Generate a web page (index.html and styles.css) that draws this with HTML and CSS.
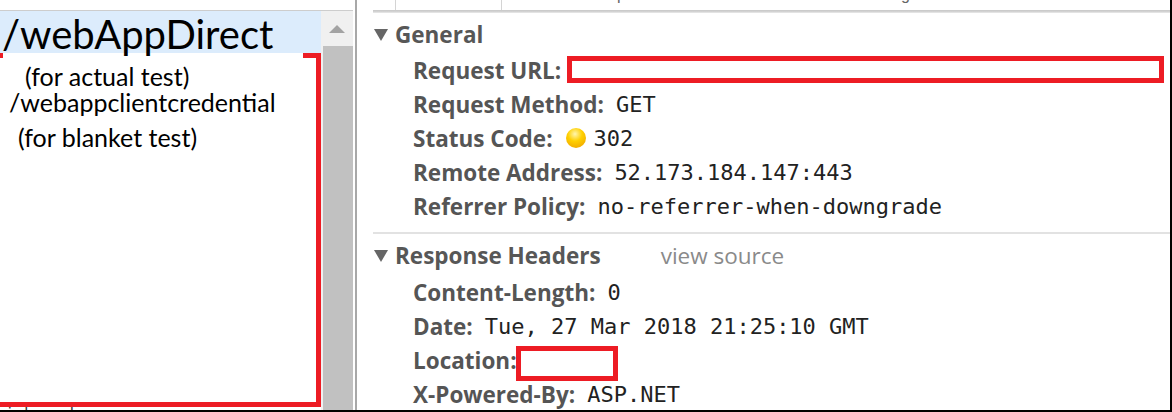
FILE: index.html
```html
<!DOCTYPE html>
<html>
<head>
<meta charset="utf-8">
<link rel="stylesheet" href="styles.css">
</head>
<body>
<div class="screen">
  <div class="left">
    <div class="top-strip"></div>
    <div class="left-body">
      <div class="list">
        <div class="row selected"></div>
        <div class="rest"></div>
        <div class="peek">ial. eaders</div>
      </div>
      <div class="scrollbar">
        <div class="arrow-cell"><span class="arrow"></span></div>
        <div class="thumb"></div>
      </div>
    </div>
    <div class="red-frame"></div>
    <div class="note-box">
      <div class="note-a">(for actual test)</div>
      <div class="note-b">/webappclientcredential</div>
      <div class="note-c">(for blanket test)</div>
    </div>
    <div class="note-title">/webAppDirect</div>
  </div>
  <div class="divider"><span class="gap"></span><span class="line"></span></div>
  <div class="right">
    <div class="cols">
      <span class="col c1"></span>
      <span class="col c2"><span class="desc d1">p</span></span>
      <span class="col c3"><span class="desc d2">g</span></span>
    </div>
    <div class="rule"></div>
    <div class="content">
      <div class="section-head"><span class="tri"></span>General</div>
      <div class="kv"><span class="k">Request URL:</span><span class="redact url"></span></div>
      <div class="kv"><span class="k">Request Method:</span><span class="v">GET</span></div>
      <div class="kv"><span class="k">Status Code:</span><span class="dot"></span><span class="v">302</span></div>
      <div class="kv"><span class="k">Remote Address:</span><span class="v">52.173.184.147:443</span></div>
      <div class="kv"><span class="k">Referrer Policy:</span><span class="v">no-referrer-when-downgrade</span></div>
      <div class="sep"></div>
      <div class="section-head second"><span class="tri"></span>Response Headers<span class="viewsrc">view source</span></div>
      <div class="kv"><span class="k">Content-Length:</span><span class="v">0</span></div>
      <div class="kv"><span class="k">Date:</span><span class="v">Tue, 27 Mar 2018 21:25:10 GMT</span></div>
      <div class="kv"><span class="k loc">Location:</span><span class="redact locbox"></span></div>
      <div class="kv"><span class="k">X-Powered-By:</span><span class="v">ASP.NET</span></div>
    </div>
  </div>
</div>
</body>
</html>
```
FILE: styles.css
```css
html, body {
  margin: 0;
  padding: 0;
  background: #fff;
  overflow: hidden;
}
.screen {
  width: 1172px;
  height: 410px;
  border-bottom: 2px solid #000;
  display: flex;
  overflow: hidden;
}
.left {
  position: relative;
  width: 353px;
  flex: none;
  display: flex;
  flex-direction: column;
  overflow: hidden;
}
.top-strip {
  height: 10px;
  border-bottom: 1px solid #cdcdcd;
  flex: none;
}
.left-body {
  flex: 1;
  display: flex;
  min-height: 0;
}
.list {
  width: 321px;
  flex: none;
  display: flex;
  flex-direction: column;
  overflow: hidden;
}
.row.selected {
  height: 42px;
  background: #dcecfc;
  flex: none;
}
.rest {
  flex: 1;
}
.peek {
  height: 4px;
  overflow: hidden;
  font-family: "Liberation Sans", sans-serif;
  font-size: 16px;
  line-height: 16px;
  color: #333;
  padding-left: 8px;
  letter-spacing: 2px;
  white-space: nowrap;
}
.scrollbar {
  width: 32px;
  flex: none;
  display: flex;
  flex-direction: column;
  background: #f0f0f0;
}
.arrow-cell {
  height: 35px;
  flex: none;
  display: flex;
  align-items: center;
  justify-content: center;
}
.arrow {
  width: 0;
  height: 0;
  border-left: 8px solid transparent;
  border-right: 8px solid transparent;
  border-bottom: 8px solid #a3a3a3;
}
.thumb {
  flex: 1;
  margin-left: 2px;
  background: #c1c1c1;
}
.divider {
  width: 4px;
  flex: none;
  display: flex;
}
.divider .gap {
  width: 2px;
  background: #fff;
}
.divider .line {
  width: 2px;
  background: #a8a8a8;
}
.right {
  flex: 1;
  border-right: 2px solid #000;
  display: flex;
  flex-direction: column;
  min-width: 0;
}
.cols {
  height: 10px;
  flex: none;
  display: flex;
  overflow: hidden;
}
.col {
  position: relative;
  height: 10px;
  border-right: 1px solid #d4d4d4;
  flex: none;
}
.c1 { width: 38px; }
.c2 { width: 105px; }
.c3 { flex: 1; border-right: none; }
.desc {
  position: absolute;
  top: -14px;
  font-family: "Liberation Sans", sans-serif;
  font-size: 16px;
  color: #666;
}
.d1 { left: 221px; }
.d2 { left: 399px; }
.rule {
  height: 3px;
  margin-left: 16px;
  background: linear-gradient(#cbcbcb, #cbcbcb 1px, #dadada 2px, #ececec);
  flex: none;
}
.content {
  padding-left: 17px;
  padding-top: 4px;
  font-family: "Open Sans", "Noto Sans", sans-serif;
  color: #555;
}
.section-head {
  height: 34px;
  display: flex;
  align-items: center;
  font-weight: bold;
  font-size: 22.5px;
  color: #575757;
  margin-bottom: 2px;
}
.section-head.second {
  margin-bottom: 3px;
}
.tri {
  width: 0;
  height: 0;
  border-left: 7px solid transparent;
  border-right: 7px solid transparent;
  border-top: 12px solid #666;
  margin-right: 7px;
  margin-top: 2px;
}
.viewsrc {
  font-weight: normal;
  color: #8a8a8a;
  margin-left: 60px;
}
.kv {
  height: 34px;
  display: flex;
  align-items: center;
  padding-left: 39px;
}
.k {
  font-weight: bold;
  font-size: 22.5px;
  color: #555;
  margin-right: 12px;
}
.k.loc {
  margin-right: -1px;
}
.v {
  font-family: "DejaVu Sans Mono", "Liberation Mono", monospace;
  font-size: 22px;
  color: #222;
}
.dot {
  width: 20px;
  height: 20px;
  border-radius: 50%;
  background: radial-gradient(circle at 45% 30%, #fff6b0 0, #ffd000 40%, #f0a800 85%);
  margin-left: 1px;
  margin-right: 8px;
}
.redact {
  border: 5px solid #ed1c24;
  box-sizing: border-box;
  background: #fff;
}
.url {
  width: 597px;
  height: 27px;
  margin-top: -2px;
  margin-left: -6px;
}
.locbox {
  width: 102px;
  height: 35px;
  margin-top: 6px;
}
.sep {
  height: 2px;
  background: #e2e2e2;
  margin: 9px 0 4px -1px;
}
.red-frame {
  position: absolute;
  left: -10px;
  top: 53px;
  width: 326px;
  height: 344px;
  border: 5px solid #ed1c24;
  border-left-width: 0;
}
.note-title {
  position: absolute;
  left: 2px;
  top: 12px;
  font-family: "Lato", "Liberation Sans", sans-serif;
  font-size: 40px;
  line-height: 44px;
  color: #000;
  white-space: nowrap;
}
.note-box {
  position: absolute;
  left: 3px;
  top: 53px;
  width: 300px;
  background: #fff;
  font-family: "Lato", "Liberation Sans", sans-serif;
  color: #000;
}
.note-a {
  font-size: 25px;
  padding-left: 22px;
  line-height: 30px;
  padding-top: 8px;
}
.note-b {
  font-size: 25px;
  padding-left: 6px;
  line-height: 22px;
}
.note-c {
  font-size: 25px;
  padding-left: 15px;
  line-height: 30px;
  padding-top: 9px;
}
```
